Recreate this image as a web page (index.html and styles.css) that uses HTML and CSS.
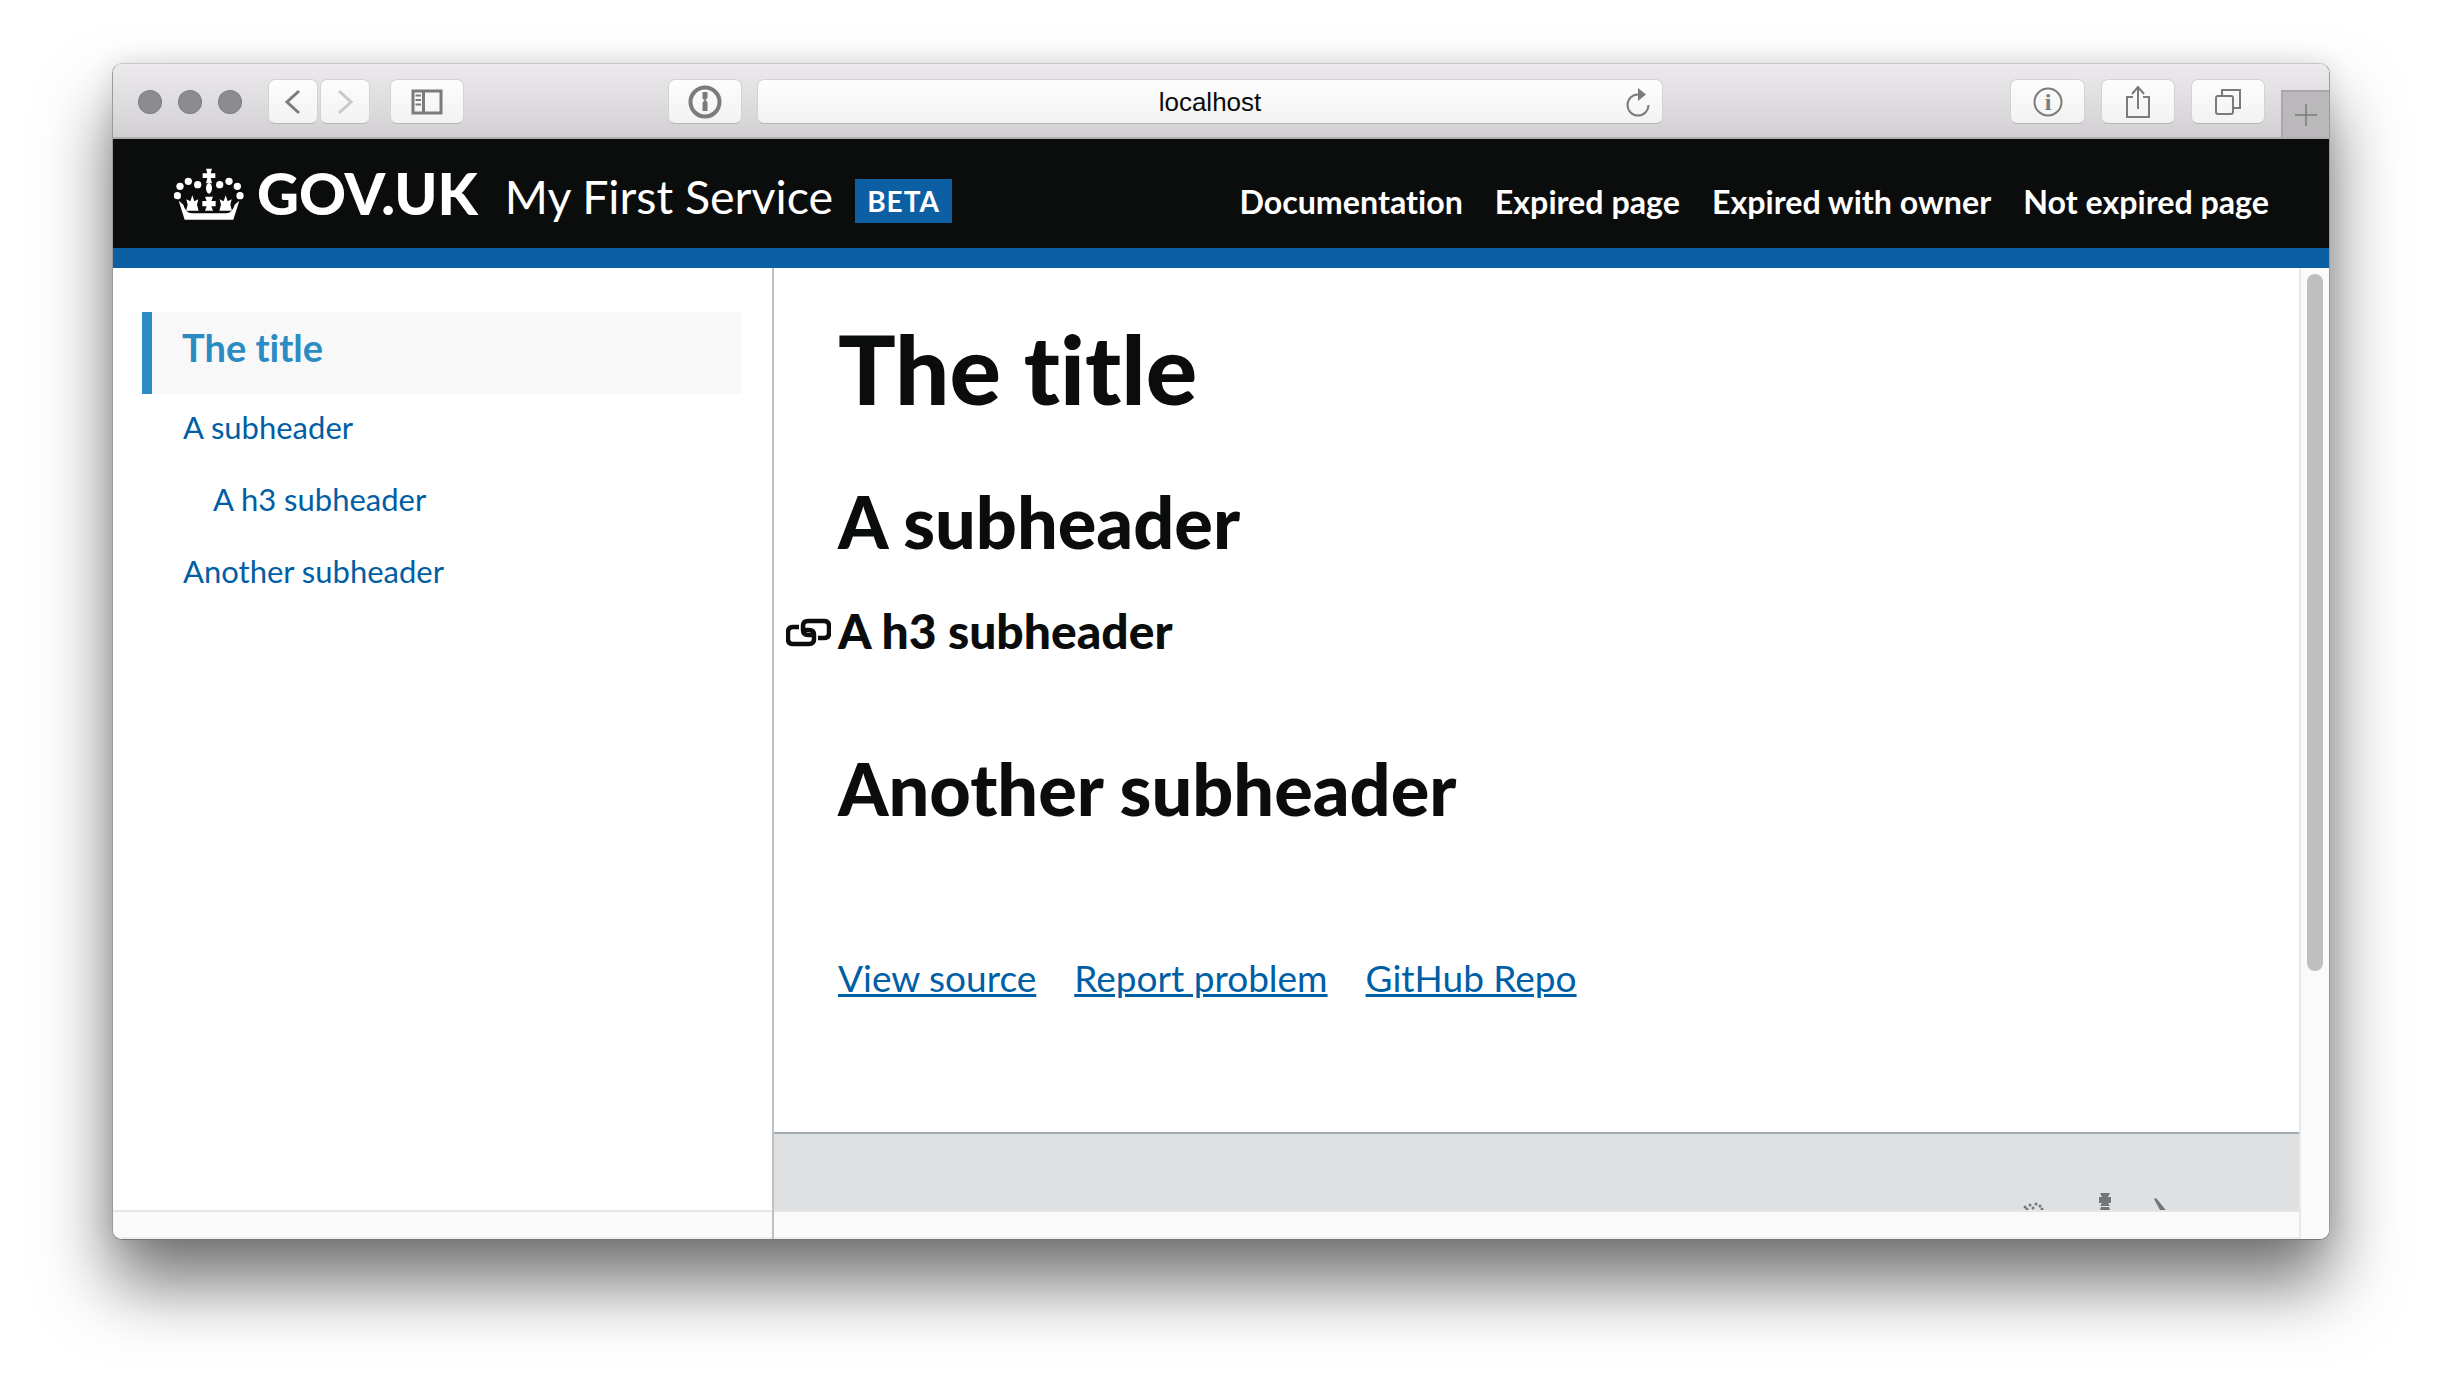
FILE: index.html
```html
<!DOCTYPE html>
<html lang="en">
<head>
    <title>My First Service</title>
    <link rel="stylesheet" href="styles.css">
</head>
<body>
    <div class="window">
        <div class="toolbar">
            <span class="dot dot1"></span>
            <span class="dot"></span>
            <span class="dot"></span>
            <button class="tbBtn backBtn">
                <svg width="20" height="28" viewBox="0 0 20 28"><path d="M16 3 L4 14 L16 25" class="ico"/></svg>
            </button>
            <button class="tbBtn fwdBtn">
                <svg width="20" height="28" viewBox="0 0 20 28"><path d="M4 3 L16 14 L4 25" class="ico light"/></svg>
            </button>
            <button class="tbBtn wideBtn sideBtn">
                <svg width="32" height="26" viewBox="0 0 32 26">
                    <rect x="2" y="2" width="28" height="22" class="ico"/>
                    <path d="M12.5 2 V24" class="ico"/>
                    <path d="M4.5 6.5 H10 M4.5 11 H10 M4.5 15.5 H10" class="ico thin"/>
                </svg>
            </button>
            <button class="tbBtn wideBtn passBtn">
                <svg width="36" height="36" viewBox="0 0 36 36">
                    <circle cx="18" cy="18" r="14.5" class="ico thick"/>
                    <path d="M15.5 8 H20.5 V14 L18.5 16 L20.5 18 V27 H15.5 V18.5 L17.5 16.5 L15.5 14.5 Z" class="icoFill"/>
                </svg>
            </button>
            <div class="urlBar">
                <span class="urlText">localhost</span>
                <svg class="reload" width="26" height="30" viewBox="0 0 26 30">
                    <path d="M12 7.5 A10.5 10.5 0 1 0 22.5 18" class="ico thin"/>
                    <path d="M12 1 L20 7.5 L12 14 Z" class="icoFill"/>
                </svg>
            </div>
            <button class="tbBtn infoBtn">
                <svg width="32" height="32" viewBox="0 0 32 32">
                    <circle cx="16" cy="16" r="13.5" class="ico thin"/>
                    <text x="16" y="24" class="infoI">i</text>
                </svg>
            </button>
            <button class="tbBtn shareBtn">
                <svg width="28" height="34" viewBox="0 0 28 34">
                    <path d="M9 12 H3 V32 H25 V12 H19" class="ico thin"/>
                    <path d="M14 24 V3 M8 9 L14 2 L20 9" class="ico thin"/>
                </svg>
            </button>
            <button class="tbBtn tabsBtn">
                <svg width="28" height="28" viewBox="0 0 28 28">
                    <rect x="2" y="8" width="17" height="18" rx="2" class="ico thin"/>
                    <path d="M8 7 V2 H26 V20 H20" class="ico thin"/>
                </svg>
            </button>
            <div class="newTab">
                <svg width="24" height="24" viewBox="0 0 24 24"><path d="M12 1 V23 M1 12 H23" class="ico plus"/></svg>
            </div>
        </div>

        <div class="govHeader">
            <a class="logo">
                <svg class="crown" width="70" height="52" viewBox="70 42 210 156">
                    <path d="M166 44h18l-4 14h14v14h-14l4 16h-18l4-16h-14V58h14z"/>
                    <ellipse cx="175" cy="103" rx="9" ry="16"/>
                    <circle cx="113" cy="82" r="11"/>
                    <circle cx="235" cy="82" r="11"/>
                    <circle cx="88" cy="97" r="11"/>
                    <circle cx="260" cy="97" r="11"/>
                    <circle cx="80" cy="125" r="11"/>
                    <circle cx="268" cy="125" r="11"/>
                    <circle cx="141" cy="92" r="11"/>
                    <circle cx="207" cy="92" r="11"/>
                    <path d="M84 140 L102 197 H248 L266 140 L252 152 Q246 176 226 178 H124 Q104 176 98 152 Z"/>
                    <path d="M163 128h24l-5 13h13v16h-13l5 13h-24l5-13h-13v-16h13z"/>
                    <path d="M125 124 L131 142 L143 136 L139 152 L144 170 H106 L111 152 L107 136 L119 142 Z"/>
                    <path d="M225 124 L231 142 L243 136 L239 152 L244 170 H206 L211 152 L207 136 L219 142 Z"/>
                </svg>
                <span class="logoText">GOV.UK</span>
            </a>
            <span class="serviceName">My First Service</span>
            <span class="phase">BETA</span>
            <nav class="topNav">
                <a>Documentation</a>
                <a>Expired page</a>
                <a>Expired with owner</a>
                <a>Not expired page</a>
            </nav>
        </div>

        <div class="page">
            <div class="sidebar">
                <ul class="toc">
                    <li class="tocItem active"><a>The title</a></li>
                    <li class="tocItem"><a>A subheader</a></li>
                    <li class="tocItem sub"><a>A h3 subheader</a></li>
                    <li class="tocItem"><a>Another subheader</a></li>
                </ul>
                <div class="hBar"></div>
            </div>
            <div class="view">
                <div class="viewLeft">
                    <div class="article">
                        <h1>The title</h1>
                        <h2>A subheader</h2>
                        <h3>
                            <svg class="anchor" width="45" height="29" viewBox="0 0 45 29">
                                <path d="M13 9 H7 Q2 9 2 14 V21 Q2 26 7 26 H23 Q28 26 28 21 V17 Q28 12 23 12 H19" class="chain"/>
                                <path d="M32 20 H38 Q43 20 43 15 V8 Q43 3 38 3 H22 Q17 3 17 8 V12 Q17 17 22 17 H26" class="chain"/>
                            </svg>
                            A h3 subheader
                        </h3>
                        <h2 class="second">Another subheader</h2>
                        <div class="links">
                            <a>View source</a>
                            <a>Report problem</a>
                            <a>GitHub Repo</a>
                        </div>
                    </div>
                    <div class="footer">
                        <svg class="footCrest" width="144" height="17" viewBox="0 0 144 17">
                            <circle cx="2" cy="14" r="1.5"/>
                            <circle cx="4" cy="16" r="1.5"/>
                            <circle cx="7" cy="12" r="1.5"/>
                            <circle cx="10" cy="15" r="1.5"/>
                            <circle cx="13" cy="11" r="1.5"/>
                            <circle cx="17" cy="13" r="1.5"/>
                            <circle cx="19" cy="16" r="1.5"/>
                            <path d="M77 0h10l-2 4h3v6h-3l2 3H77l2-3h-3V4h3zM78 14h8l1 3H77z"/>
                            <path d="M131 6l2-1 9 11 1 1h-6z"/>
                        </svg>
                    </div>
                    <div class="hBar"></div>
                </div>
                <div class="vBar"><div class="thumb"></div></div>
            </div>
        </div>
    </div>
</body>
</html>
```

FILE: styles.css
```css
*{
    box-sizing: border-box;
}
body{
    margin: 0;
    padding: 63px 112px 0;
    background-color: #fff;
    font-family: "Lato", "Liberation Sans", sans-serif;
    font-variant-ligatures: none;
    height: 1400px;
    overflow: hidden;
}
a{
    text-decoration: none;
}

.window{
    width: 2218px;
    height: 1177px;
    border: 1px solid #9a9a9a;
    border-top-color: #c6c6c6;
    border-bottom-color: #777;
    border-radius: 10px;
    overflow: hidden;
    background-color: #fff;
    box-shadow: 0 44px 70px rgba(0, 0, 0, 0.55), 0 0 24px rgba(0, 0, 0, 0.1);
}

.toolbar{
    display: flex;
    align-items: center;
    height: 75px;
    padding-top: 2px;
    background: linear-gradient(#eceaec, #d2d0d3);
    border-bottom: 2px solid #b1afb1;
}
.dot{
    width: 24px;
    height: 24px;
    border-radius: 50%;
    background-color: #8c8c8e;
    border: 1px solid #7f7f81;
    margin-left: 16px;
}
.dot1{
    margin-left: 25px;
}
.tbBtn{
    display: flex;
    align-items: center;
    justify-content: center;
    width: 50px;
    height: 45px;
    padding: 0;
    border: 1px solid #d4d2d4;
    border-bottom-color: #b8b6b8;
    border-radius: 7px;
    background: linear-gradient(#fdfdfd, #f2f2f2);
}
.wideBtn{
    width: 74px;
}
.backBtn{
    margin-left: 26px;
}
.fwdBtn{
    margin-left: 2px;
}
.sideBtn{
    margin-left: 20px;
}
.passBtn{
    margin-left: 204px;
}
.infoBtn{
    width: 75px;
    margin-left: 347px;
}
.shareBtn, .tabsBtn{
    width: 74px;
    margin-left: 16px;
}
.ico{
    fill: none;
    stroke: #7b7b7b;
    stroke-width: 3;
}
.light{
    stroke: #c9c9c9;
}
.thin{
    stroke-width: 2;
}
.thick{
    stroke-width: 4;
}
.plus{
    stroke-width: 1.5;
}
.icoFill{
    fill: #7b7b7b;
}
.infoI{
    font-family: "Liberation Serif", serif;
    font-size: 24px;
    font-weight: bold;
    fill: #7b7b7b;
    text-anchor: middle;
}
.urlBar{
    display: flex;
    align-items: center;
    justify-content: center;
    position: relative;
    width: 907px;
    height: 45px;
    margin-left: 15px;
    padding-top: 2px;
    border: 1px solid #d4d2d4;
    border-bottom-color: #b8b6b8;
    border-radius: 7px;
    background: linear-gradient(#fefefe, #f2f2f2);
}
.urlText{
    font-family: "Liberation Sans", sans-serif;
    font-size: 26px;
    color: #0b0b0b;
}
.reload{
    position: absolute;
    right: 10px;
    top: 7px;
}
.newTab{
    display: flex;
    align-items: center;
    justify-content: center;
    width: 48px;
    height: 47px;
    margin-left: 16px;
    align-self: flex-end;
    background-color: #bab8ba;
    border-left: 2px solid #a9a7a9;
    border-top: 2px solid #a9a7a9;
}

.govHeader{
    display: flex;
    align-items: center;
    height: 129px;
    padding: 0 60px 0 61px;
    background-color: #0b0c0c;
    border-bottom: 20px solid #0d5fa3;
    color: #fff;
}
.logo{
    display: flex;
    align-items: center;
}
.crown{
    fill: #fff;
}
.logoText{
    margin-left: 13px;
    margin-bottom: 2px;
    font-size: 58px;
    font-weight: 900;
    line-height: 60px;
}
.serviceName{
    margin-left: 27px;
    margin-top: 4px;
    font-size: 46.5px;
    font-weight: 400;
}
.phase{
    margin-left: 22px;
    margin-top: 14px;
    width: 97px;
    height: 44px;
    line-height: 44px;
    text-align: center;
    background-color: #0d5fa3;
    font-size: 28px;
    font-weight: 700;
    letter-spacing: 1px;
}
.topNav{
    display: flex;
    gap: 32px;
    margin-left: auto;
    margin-top: 16px;
    font-size: 32.2px;
    font-weight: 700;
}

.page{
    display: flex;
    height: 971px;
}
.sidebar{
    display: flex;
    flex-direction: column;
    width: 661px;
    border-right: 2px solid #bfc1c3;
}
.toc{
    flex: 1;
    list-style: none;
    margin: 0;
    padding: 44px 30px 0 29px;
    font-size: 31px;
    color: #005ea5;
}
.tocItem{
    display: flex;
    align-items: center;
    height: 72px;
    padding-left: 41px;
    padding-bottom: 14px;
}
.active{
    height: 82px;
    margin-bottom: 4px;
    padding-left: 30px;
    padding-bottom: 12px;
    border-left: 10px solid #2b8cc4;
    background-color: #f8f8f8;
    color: #2b8cc4;
    font-size: 38px;
    font-weight: 700;
}
.sub{
    padding-left: 71px;
}
.hBar{
    height: 29px;
    flex-shrink: 0;
    background-color: #fafafa;
    border-top: 2px solid #e6e6e6;
    border-bottom: 2px solid #eee;
}

.view{
    flex: 1;
    display: flex;
}
.viewLeft{
    flex: 1;
    display: flex;
    flex-direction: column;
}
.article{
    flex: 1;
    padding: 40px 0 0 64px;
    color: #0b0c0c;
}
h1{
    margin: 0;
    font-size: 96px;
    line-height: 120px;
    font-weight: 900;
}
h2{
    margin: 49px 0 0;
    font-size: 72px;
    line-height: 88px;
    font-weight: 900;
}
h3{
    position: relative;
    margin: 36px 0 0;
    font-size: 48px;
    line-height: 60px;
    font-weight: 900;
}
.anchor{
    position: absolute;
    left: -52px;
    top: 17px;
}
.chain{
    fill: none;
    stroke: #0b0c0c;
    stroke-width: 4.5;
}
.second{
    margin-top: 83px;
}
.links{
    display: flex;
    gap: 38px;
    margin-top: 123px;
    font-size: 37px;
    color: #005ea5;
}
.links a{
    text-decoration: underline;
}
.footer{
    display: flex;
    justify-content: flex-end;
    align-items: flex-end;
    height: 78px;
    padding-right: 132px;
    background-color: #dee0e2;
    border-top: 2px solid #a1acb2;
}
.footCrest{
    fill: #6f777b;
}
.vBar{
    width: 30px;
    padding: 6px 5px 0 6px;
    background-color: #fafafa;
    border-left: 2px solid #e8e8e8;
}
.thumb{
    width: 16px;
    height: 697px;
    border-radius: 8px;
    background-color: #bfbfbf;
}
```
